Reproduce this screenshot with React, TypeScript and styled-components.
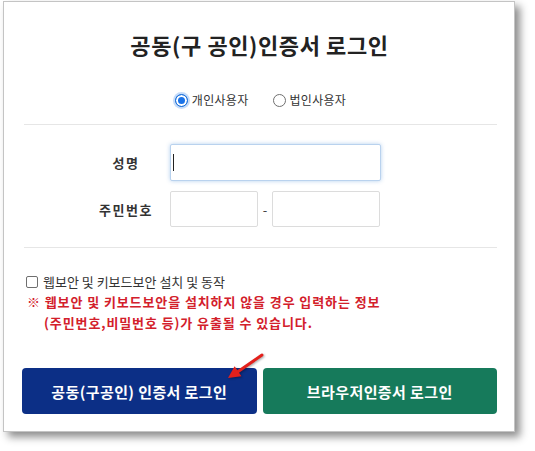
import React from 'react';
import styled, { createGlobalStyle } from 'styled-components';

const GlobalStyle = createGlobalStyle`
  body {
    margin: 0;
    background: #ffffff;
    font-family: 'Noto Sans CJK KR', 'Noto Sans', sans-serif;
  }
`;

const Page = styled.div`
  position: relative;
  width: 535px;
  height: 451px;
  padding: 1px 0 0 3px;
  box-sizing: border-box;
`;

const Panel = styled.section`
  width: 512px;
  height: 431px;
  box-sizing: border-box;
  border: 1px solid #c4c4c4;
  background: #ffffff;
  box-shadow: 5px 5px 8px rgba(0, 0, 0, 0.45);
  padding: 0 17px 0 18px;
  display: flex;
  flex-direction: column;
`;

const Title = styled.h1`
  margin: 27px 0 0;
  font-size: 22px;
  line-height: 30px;
  font-weight: 700;
  letter-spacing: 0.6px;
  text-align: center;
  color: #222222;
`;

const RadioGroup = styled.div`
  margin-top: 31px;
  height: 20px;
  display: flex;
  justify-content: center;
  align-items: center;
  gap: 24px;
  padding-left: 2px;
`;

const RadioLabel = styled.label`
  display: flex;
  align-items: center;
  gap: 4px;
  font-size: 12px;
  line-height: 20px;
  letter-spacing: 0.3px;
  color: #333333;
`;

const RadioMark = styled.span<{ $checked?: boolean }>`
  width: 13px;
  height: 13px;
  box-sizing: border-box;
  border-radius: 50%;
  border: 1px solid ${({ $checked }) => ($checked ? '#1a6fd8' : '#6f6f6f')};
  background: ${({ $checked }) => ($checked ? '#1a73e8' : '#ffffff')};
  box-shadow: ${({ $checked }) =>
    $checked
      ? 'inset 0 0 0 2px #ffffff, 0 0 0 2px rgba(26, 115, 232, 0.25)'
      : 'none'};
`;

const Divider = styled.hr<{ $top: number }>`
  margin: ${({ $top }) => $top}px 0 0 2px;
  border: 0;
  border-top: 1px solid #e6e6e6;
  height: 0;
`;

const Form = styled.div`
  margin-top: 19px;
  display: flex;
  flex-direction: column;
  gap: 10px;
`;

const FormRow = styled.div`
  display: flex;
  align-items: center;
  padding-left: 60px;
`;

const Label = styled.span`
  width: 88px;
  text-align: center;
  font-size: 13px;
  font-weight: 700;
  letter-spacing: 1.5px;
  color: #333333;
`;

const Field = styled.div`
  position: relative;
  display: flex;
`;

const Input = styled.input<{ $w: number; $h: number; $focused?: boolean }>`
  width: ${({ $w }) => $w}px;
  height: ${({ $h }) => $h}px;
  box-sizing: border-box;
  border: 1px solid ${({ $focused }) => ($focused ? '#b9d2ee' : '#dcdcdc')};
  box-shadow: ${({ $focused }) =>
    $focused ? '0 0 4px rgba(90, 150, 220, 0.45)' : 'none'};
  border-radius: 2px;
  outline: none;
  background: #ffffff;
  padding: 0 6px;
`;

const Caret = styled.span`
  position: absolute;
  left: 3px;
  top: 10px;
  width: 1px;
  height: 17px;
  background: #222222;
`;

const Dash = styled.span`
  width: 14px;
  text-align: center;
  font-size: 13px;
  color: #444444;
`;

const CheckRow = styled.label`
  margin-top: 25px;
  display: flex;
  align-items: center;
  gap: 5px;
  padding-left: 4px;
  font-size: 13px;
  line-height: 18px;
  color: #333333;
`;

const CheckBox = styled.span`
  width: 12px;
  height: 12px;
  box-sizing: border-box;
  border: 1px solid #6f6f6f;
  border-radius: 2px;
  background: #ffffff;
`;

const Warning = styled.p`
  margin: 0;
  padding-left: 5px;
  font-size: 13px;
  line-height: 21px;
  font-weight: 700;
  letter-spacing: 0.9px;
  color: #d3202b;
`;

const WarningLine = styled.span<{ $indent?: boolean }>`
  display: block;
  padding-left: ${({ $indent }) => ($indent ? '17px' : '0')};
`;

const ButtonRow = styled.div`
  margin-top: 35px;
  display: flex;
  gap: 6px;
`;

const LoginButton = styled.button<{ $bg: string }>`
  flex: 1;
  height: 46px;
  border: 0;
  border-radius: 4px;
  background: ${({ $bg }) => $bg};
  color: #ffffff;
  font-family: inherit;
  font-size: 15px;
  font-weight: 700;
  letter-spacing: 0.4px;
  cursor: pointer;
`;

const Arrow = styled.svg`
  position: absolute;
  left: 220px;
  top: 346px;
  filter: drop-shadow(1px 1px 1px rgba(0, 0, 0, 0.35));
`;

export default function App() {
  return (
    <>
      <GlobalStyle />
      <Page>
        <Panel>
          <Title>공동(구 공인)인증서 로그인</Title>

          <RadioGroup>
            <RadioLabel>
              <RadioMark $checked />
              개인사용자
            </RadioLabel>
            <RadioLabel>
              <RadioMark />
              법인사용자
            </RadioLabel>
          </RadioGroup>

          <Divider $top={14} />

          <Form>
            <FormRow>
              <Label>성명</Label>
              <Field>
                <Input $w={211} $h={37} $focused />
                <Caret />
              </Field>
            </FormRow>
            <FormRow>
              <Label>주민번호</Label>
              <Input $w={88} $h={36} />
              <Dash>-</Dash>
              <Input $w={108} $h={36} />
            </FormRow>
          </Form>

          <Divider $top={20} />

          <CheckRow>
            <CheckBox />
            웹보안 및 키보드보안 설치 및 동작
          </CheckRow>
          <Warning>
            <WarningLine>※ 웹보안 및 키보드보안을 설치하지 않을 경우 입력하는 정보</WarningLine>
            <WarningLine $indent>(주민번호,비밀번호 등)가 유출될 수 있습니다.</WarningLine>
          </Warning>

          <ButtonRow>
            <LoginButton $bg="#0c2f86">공동(구공인) 인증서 로그인</LoginButton>
            <LoginButton $bg="#167a5b">브라우저인증서 로그인</LoginButton>
          </ButtonRow>
        </Panel>

        <Arrow width="50" height="40" viewBox="0 0 50 40">
          <line x1="42" y1="9" x2="16" y2="27" stroke="#e3201b" strokeWidth="3" strokeLinecap="round" />
          <polygon points="8,32 21.4,30.3 14.6,20.3" fill="#e3201b" />
        </Arrow>
      </Page>
    </>
  );
}
